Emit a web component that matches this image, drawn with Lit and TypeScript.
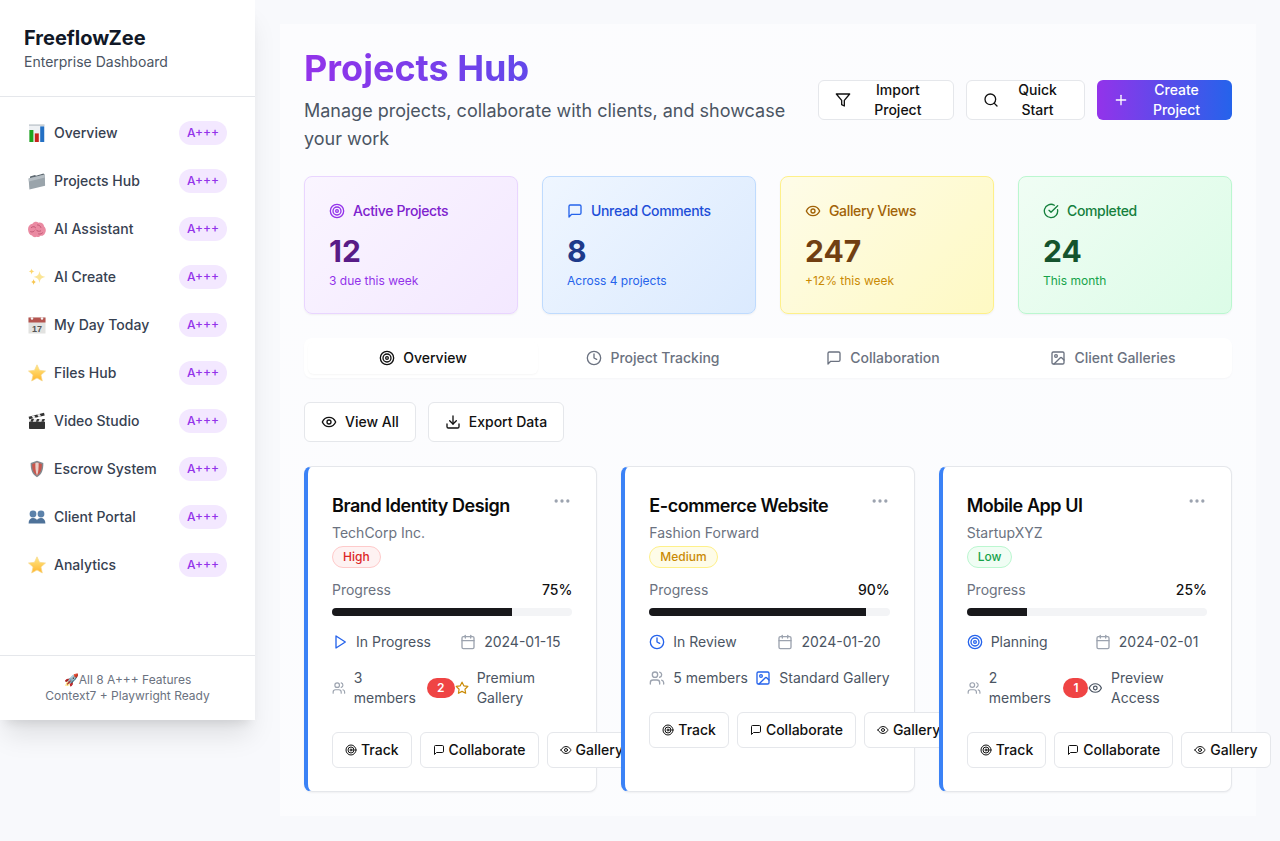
import { LitElement, css, html, svg } from "lit";
import { customElement } from "lit/decorators.js";

const shapes: Record<string, unknown> = {
  target: svg`<circle cx="12" cy="12" r="10"/><circle cx="12" cy="12" r="6"/><circle cx="12" cy="12" r="2"/>`,
  message: svg`<path d="M21 15a2 2 0 0 1-2 2H7l-4 4V5a2 2 0 0 1 2-2h14a2 2 0 0 1 2 2z"/>`,
  eye: svg`<path d="M2 12s3-7 10-7 10 7 10 7-3 7-10 7-10-7-10-7Z"/><circle cx="12" cy="12" r="3"/>`,
  check: svg`<path d="M21.801 10A10 10 0 1 1 17 3.335"/><path d="m9 11 3 3L22 4"/>`,
  filter: svg`<polygon points="22 3 2 3 10 12.46 10 19 14 21 14 12.46 22 3"/>`,
  search: svg`<circle cx="11" cy="11" r="8"/><path d="m21 21-4.3-4.3"/>`,
  plus: svg`<path d="M5 12h14"/><path d="M12 5v14"/>`,
  clock: svg`<circle cx="12" cy="12" r="10"/><polyline points="12 6 12 12 16 14"/>`,
  image: svg`<rect x="3" y="3" width="18" height="18" rx="2"/><circle cx="9" cy="9" r="2"/><path d="m21 15-3.086-3.086a2 2 0 0 0-2.828 0L6 21"/>`,
  download: svg`<path d="M21 15v4a2 2 0 0 1-2 2H5a2 2 0 0 1-2-2v-4"/><polyline points="7 10 12 15 17 10"/><line x1="12" y1="15" x2="12" y2="3"/>`,
  play: svg`<polygon points="6 3 20 12 6 21 6 3"/>`,
  calendar: svg`<path d="M8 2v4"/><path d="M16 2v4"/><rect x="3" y="4" width="18" height="18" rx="2"/><path d="M3 10h18"/>`,
  users: svg`<path d="M16 21v-2a4 4 0 0 0-4-4H6a4 4 0 0 0-4 4v2"/><circle cx="9" cy="7" r="4"/><path d="M22 21v-2a4 4 0 0 0-3-3.87"/><path d="M16 3.13a4 4 0 0 1 0 7.75"/>`,
  star: svg`<polygon points="12 2 15.09 8.26 22 9.27 17 14.14 18.18 21.02 12 17.77 5.82 21.02 7 14.14 2 9.27 8.91 8.26 12 2"/>`,
  more: svg`<circle cx="12" cy="12" r="1"/><circle cx="19" cy="12" r="1"/><circle cx="5" cy="12" r="1"/>`,
};

const icon = (name: string, cls = "") =>
  html`<svg class="icon ${cls}" viewBox="0 0 24 24" fill="none" stroke="currentColor" stroke-width="2" stroke-linecap="round" stroke-linejoin="round">${shapes[name]}</svg>`;

// the nav pictures, drawn on an 18 x 18 box
const pictures: Record<string, unknown> = {
  chart: svg`
    <rect x="1" y="0.5" width="15.5" height="17.5" fill="#eef1f4"/>
    <rect x="1" y="0.5" width="15.5" height="1.2" fill="#b9c1c8"/>
    <rect x="1.4" y="6" width="4" height="12" fill="#1ea51e"/>
    <rect x="6.8" y="9.4" width="4" height="8.6" fill="#c8231c"/>
    <rect x="12.2" y="2.4" width="4" height="15.6" fill="#2470c4"/>`,
  folder: svg`
    <path d="M2 4.5 7 3l1 .8 7.5-2.2.8 1v9L2.5 16Z" fill="#5d6870"/>
    <path d="M.6 6.6 16.8 2.6l.3 11.2L1.4 17.4Z" fill="#9aa4ab"/>
    <path d="M.6 6.6 16.8 2.6l.1 3L.9 9.4Z" fill="#b6bec4"/>`,
  brain: svg`
    <g transform="translate(-1 -1.8) scale(1.1 1.25)">
      <path d="M1 9.400C.6 6.600 2.600 4.600 5 4.400 6.400 2.600 9 2.400 10.400 3.600c2.400-.6 4.800.8 5.200 3 1.600 1.200 2 3.600.8 5.200-.6 1.600-2.400 2.600-4.200 2.200-.8 1-2.200 1.400-3.400.8-1.600.8-3.400.2-4.200-1C2.600 13.600 1.200 11.600 1 9.400Z" fill="#ea8aa2"/>
      <path d="M4 7.400c1.400-1 3-.8 3.800.2M9.600 5.400c1.400 0 2.600.8 3 2M3.400 10.800c1.200.4 2.400.2 3.200-.6M8.400 9.400c1 1.200 2.600 1.400 4 .8M10.600 12.600c1.200.2 2.400 0 3.400-.8" fill="none" stroke="#bd5370" stroke-width=".8" stroke-linecap="round"/>
    </g>`,
  sparkles: svg`
    <path d="M11.500 3c.7 4 1.900 5.200 6 5.900-4.100.8-5.300 2-6 6-.7-4-1.900-5.200-6-6 4.100-.7 5.300-1.900 6-5.900Z" fill="#fbe596"/>
    <path d="M3.600 .6c.4 2 .9 2.500 2.900 2.900-2 .4-2.500.9-2.900 2.900-.4-2-.9-2.500-2.900-2.900 2-.4 2.500-.9 2.900-2.900Z" fill="#fdd76e"/>
    <path d="M5.600 11c.4 2 .9 2.600 2.700 3-1.800.4-2.300 1-2.700 3-.4-2-.9-2.600-2.700-3 1.800-.4 2.300-1 2.700-3Z" fill="#f7c54d"/>`,
  calendar: svg`
    <rect x=".5" y="1.500" width="17" height="16" fill="#e2e2e0"/>
    <rect x=".5" y="1.500" width="17" height="5" fill="#b4544f"/>
    <circle cx="4" cy="2.500" r="1.200" fill="#f4f4f4"/>
    <circle cx="14" cy="2.500" r="1.200" fill="#f4f4f4"/>
    <text x="9" y="15.500" text-anchor="middle" font-family="Liberation Sans, sans-serif" font-size="9" font-weight="700" fill="#555">17</text>`,
  star: svg`
    <defs><linearGradient id="gold" x1="0" y1="0" x2="0" y2="1"><stop offset="0" stop-color="#ffe98a"/><stop offset="1" stop-color="#ffb52c"/></linearGradient></defs>
    <polygon points="9 .8 11.500 6.300 17.500 7 13 11 14.300 17 9 14 3.700 17 5 11 .5 7 6.500 6.300" fill="url(#gold)" stroke="#f6d98c" stroke-width=".7" stroke-linejoin="round"/>`,
  clapper: svg`
    <rect x="1" y="7" width="16" height="10" rx=".8" fill="#333"/>
    <rect x="1" y="7" width="16" height="2.800" fill="#e8e8e8"/>
    <path d="M3.500 7h2.500l-1.200 2.800H2.300ZM9 7h2.500l-1.200 2.800H7.800ZM14.500 7H17l-1.200 2.800h-2.500Z" fill="#333"/>
    <path d="M.6 4.700 16 .8l.7 2.600L1.300 7.300Z" fill="#333"/>
    <path d="M3.500 4 6 3.300l1.700 2.300-2.500.6ZM9 2.600l2.500-.6 1.700 2.300-2.500.6Z" fill="#eee"/>`,
  shield: svg`
    <path d="M9 .8 15.300 3c.2 6.500-1.300 11.400-6.300 14.200C4 14.400 2.500 9.500 2.700 3Z" fill="#83898f"/>
    <path d="M9 2.400 13.800 4c.1 5.300-1 9.200-4.800 11.500C5.200 13.200 4.100 9.300 4.200 4Z" fill="#c9564c"/>
    <path d="M9 2.400 10.600 3c.1 4.700 0 8.800-1.600 12.500C7.400 11.800 7.300 7.700 7.400 3Z" fill="#e9cdc6"/>`,
  team: svg`
    <circle cx="5" cy="6" r="3.400" fill="#5c82aa"/>
    <circle cx="13" cy="6" r="3.400" fill="#5c82aa"/>
    <path d="M.6 15.500c0-3.600 1.800-5.500 4.400-5.500s3.400 1 4 2.200c.6-1.200 1.400-2.200 4-2.200s4.400 1.900 4.400 5.500Z" fill="#4e7299"/>`,
};

const navItems = [
  ["chart", "Overview"],
  ["folder", "Projects Hub"],
  ["brain", "AI Assistant"],
  ["sparkles", "AI Create"],
  ["calendar", "My Day Today"],
  ["star", "Files Hub"],
  ["clapper", "Video Studio"],
  ["shield", "Escrow System"],
  ["team", "Client Portal"],
  ["star", "Analytics"],
];

const stats = [
  { tone: "purple", icon: "target", label: "Active Projects", value: "12", note: "3 due this week" },
  { tone: "blue", icon: "message", label: "Unread Comments", value: "8", note: "Across 4 projects" },
  { tone: "yellow", icon: "eye", label: "Gallery Views", value: "247", note: "+12% this week" },
  { tone: "green", icon: "check", label: "Completed", value: "24", note: "This month" },
];

const tabs = [
  ["target", "Overview"],
  ["clock", "Project Tracking"],
  ["message", "Collaboration"],
  ["image", "Client Galleries"],
];

const projects = [
  {
    title: "Brand Identity Design", client: "TechCorp Inc.", priority: "High", progress: 75,
    statusIcon: "play", status: "In Progress", date: "2024-01-15", members: "3 members", unread: 2,
    galleryIcon: "star", galleryTone: "gold", gallery: "Premium Gallery",
  },
  {
    title: "E-commerce Website", client: "Fashion Forward", priority: "Medium", progress: 90,
    statusIcon: "clock", status: "In Review", date: "2024-01-20", members: "5 members", unread: 0,
    galleryIcon: "image", galleryTone: "accent", gallery: "Standard Gallery",
  },
  {
    title: "Mobile App UI", client: "StartupXYZ", priority: "Low", progress: 25,
    statusIcon: "target", status: "Planning", date: "2024-02-01", members: "2 members", unread: 1,
    galleryIcon: "eye", galleryTone: "slate", gallery: "Preview Access",
  },
];

@customElement("app-root")
export class AppRoot extends LitElement {
  static styles = css`
    :host {
      display: flex;
      align-items: flex-start;
      min-height: 841px;
      background: #f8f9fc;
      font-family: Inter, "Noto Sans", sans-serif;
      color: #111827;
    }
    * {
      box-sizing: border-box;
    }
    .icon {
      width: 16px;
      height: 16px;
      min-width: 0;
      display: block;
    }
    .sidebar {
      width: 255px;
      height: 720px;
      flex: none;
      display: flex;
      flex-direction: column;
      background: #fff;
      box-shadow: 0 20px 25px -5px rgba(0, 0, 0, 0.1), 0 8px 10px -6px rgba(0, 0, 0, 0.1);
    }
    .brand {
      padding: 24px;
      border-bottom: 1px solid #e5e7eb;
    }
    .brand h1 {
      margin: 0;
      font-size: 20px;
      line-height: 28px;
      font-weight: 700;
    }
    .brand p {
      margin: 0;
      font-size: 14px;
      line-height: 20px;
      color: #4b5563;
    }
    .nav {
      flex: 1;
      padding: 16px;
      display: flex;
      flex-direction: column;
      gap: 8px;
    }
    .nav-item {
      height: 40px;
      padding: 0 12px;
      display: flex;
      align-items: center;
      gap: 8px;
      font-size: 14px;
      line-height: 20px;
      font-weight: 500;
      color: #374151;
    }
    .nav-pic {
      width: 18px;
      height: 18px;
      flex: none;
      display: block;
    }
    .nav-label {
      flex: 1;
    }
    .grade {
      width: 48px;
      height: 24px;
      border-radius: 999px;
      background: #f3e8ff;
      color: #9333ea;
      font-size: 12px;
      font-weight: 500;
      line-height: 24px;
      text-align: center;
    }
    .foot {
      padding: 16px;
      border-top: 1px solid #e5e7eb;
      font-size: 12px;
      line-height: 16px;
      color: #6b7280;
      text-align: center;
    }
    .panel {
      width: 976px;
      margin: 24px 0 25px 25px;
      padding: 24px;
      background: linear-gradient(135deg, #fcfcfe, #fbfcfe);
    }
    .head {
      display: flex;
      align-items: center;
      justify-content: space-between;
      margin-bottom: 24px;
    }
    .head h2 {
      margin: 0 0 9px;
      font-size: 36px;
      line-height: 40px;
      font-weight: 700;
      color: transparent;
      background: linear-gradient(90deg, #9333ea, #2563eb);
      -webkit-background-clip: text;
      background-clip: text;
    }
    .head p {
      margin: 0 0 -1px;
      font-size: 18px;
      line-height: 28px;
      color: #4b5563;
    }
    .head-actions {
      display: flex;
      gap: 12px;
    }
    .btn {
      display: flex;
      align-items: center;
      justify-content: center;
      gap: 8px;
      height: 40px;
      padding: 0 16px;
      border: 1px solid #e5e7eb;
      border-radius: 6px;
      background: #fff;
      color: #111;
      font-family: inherit;
      font-size: 14px;
      font-weight: 500;
      line-height: 20px;
    }
    .btn .icon {
      flex: none;
    }
    .btn.primary {
      border: 0;
      color: #fff;
      background: linear-gradient(90deg, #9333ea, #2563eb);
    }
    .stats {
      display: grid;
      grid-template-columns: repeat(4, 1fr);
      gap: 24px;
      margin-bottom: 24px;
    }
    .stat {
      padding: 24px;
      border: 1px solid;
      border-radius: 8px;
      box-shadow: 0 1px 2px rgba(0, 0, 0, 0.05);
    }
    .stat-label {
      display: flex;
      align-items: center;
      gap: 8px;
      font-size: 14px;
      line-height: 20px;
      font-weight: 500;
      letter-spacing: -0.025em;
    }
    .stat-value {
      margin-top: 12px;
      font-size: 30px;
      line-height: 36px;
      font-weight: 700;
    }
    .stat-note {
      margin-top: 4px;
      font-size: 12px;
      line-height: 16px;
    }
    .purple {
      background: linear-gradient(135deg, #faf5ff, #f3e8ff);
      border-color: #e9d5ff;
    }
    .purple .stat-label { color: #7e22ce; }
    .purple .stat-label .icon { color: #9333ea; }
    .purple .stat-value { color: #581c87; }
    .purple .stat-note { color: #9333ea; }
    .blue {
      background: linear-gradient(135deg, #eff6ff, #dbeafe);
      border-color: #bfdbfe;
    }
    .blue .stat-label { color: #1d4ed8; }
    .blue .stat-label .icon { color: #2563eb; }
    .blue .stat-value { color: #1e3a8a; }
    .blue .stat-note { color: #2563eb; }
    .yellow {
      background: linear-gradient(135deg, #fefce8, #fef9c3);
      border-color: #fef08a;
    }
    .yellow .stat-label { color: #a16207; }
    .yellow .stat-label .icon { color: #a16207; }
    .yellow .stat-value { color: #713f12; }
    .yellow .stat-note { color: #ca8a04; }
    .green {
      background: linear-gradient(135deg, #f0fdf4, #dcfce7);
      border-color: #bbf7d0;
    }
    .green .stat-label { color: #15803d; }
    .green .stat-label .icon { color: #15803d; }
    .green .stat-value { color: #14532d; }
    .green .stat-note { color: #16a34a; }
    .tabs {
      display: grid;
      grid-template-columns: repeat(4, 1fr);
      padding: 4px;
      margin-bottom: 24px;
      border-radius: 8px;
      background: #fff;
      box-shadow: 0 1px 2px rgba(0, 0, 0, 0.03);
    }
    .tab {
      height: 32px;
      display: flex;
      align-items: center;
      justify-content: center;
      gap: 8px;
      border-radius: 6px;
      font-size: 14px;
      line-height: 20px;
      font-weight: 500;
      color: #6b7280;
    }
    .tab.active {
      color: #111;
      background: #fff;
      box-shadow: 0 1px 2px rgba(0, 0, 0, 0.04);
    }
    .tools {
      display: flex;
      gap: 12px;
      margin-bottom: 24px;
    }
    .cards {
      display: grid;
      grid-template-columns: repeat(3, 1fr);
      gap: 24px;
    }
    .card {
      padding: 24px 24px 23px;
      min-width: 0;
      background: #fff;
      border: 1px solid #e5e7eb;
      border-left: 4px solid #3b82f6;
      border-radius: 8px;
      box-shadow: 0 1px 2px rgba(0, 0, 0, 0.05);
    }
    .card-top {
      display: flex;
      justify-content: space-between;
      align-items: flex-start;
    }
    .card-top h3 {
      margin: 0;
      font-size: 18px;
      line-height: 30px;
      font-weight: 600;
      letter-spacing: -0.025em;
      color: #0a0a0a;
    }
    .more {
      width: 20px;
      height: 20px;
      color: #9ca3af;
    }
    .client {
      margin-top: 2px;
      font-size: 14px;
      line-height: 20px;
      color: #6b7280;
    }
    .priority {
      display: block;
      width: fit-content;
      margin-top: 3px;
      padding: 2px 10px;
      border: 1px solid;
      border-radius: 999px;
      font-size: 12px;
      line-height: 16px;
      font-weight: 500;
    }
    .High { background: #fef2f2; color: #dc2626; border-color: #fecaca; }
    .Medium { background: #fefce8; color: #ca8a04; border-color: #fef08a; }
    .Low { background: #f0fdf4; color: #16a34a; border-color: #bbf7d0; }
    .progress-row {
      display: flex;
      justify-content: space-between;
      margin-top: 12px;
      font-size: 14px;
      line-height: 20px;
      color: #6b7280;
    }
    .progress-row b {
      font-weight: 500;
      color: #111;
    }
    .track {
      height: 8px;
      margin-top: 8px;
      border-radius: 999px;
      background: #f3f4f6;
      overflow: hidden;
    }
    .fill {
      height: 100%;
      background: #18181b;
    }
    .meta {
      display: grid;
      grid-template-columns: 1fr 1fr;
      gap: 16px;
      margin-top: 16px;
    }
    .meta-item,
    .people,
    .gallery {
      display: flex;
      align-items: center;
      gap: 8px;
      font-size: 14px;
      line-height: 20px;
      color: #4b5563;
    }
    .accent { color: #2563eb; }
    .muted { color: #9ca3af; }
    .gold { color: #ca8a04; }
    .slate { color: #4b5563; }
    .team {
      display: flex;
      justify-content: space-between;
      align-items: center;
      margin-top: 16px;
    }
    .unread {
      flex: none;
      margin-left: 1px;
      padding: 2px 10px;
      border-radius: 999px;
      background: #ef4444;
      color: #fff;
      font-size: 12px;
      line-height: 16px;
      font-weight: 600;
    }
    .card-actions {
      display: flex;
      gap: 8px;
      margin-top: 24px;
    }
    .mini {
      flex: none;
      display: flex;
      align-items: center;
      gap: 4px;
      height: 36px;
      padding: 0 12px;
      border: 1px solid #e5e7eb;
      border-radius: 6px;
      background: #fff;
      color: #111;
      font-family: inherit;
      font-size: 14px;
      line-height: 20px;
      font-weight: 500;
    }
    .mini .icon {
      width: 12px;
      height: 12px;
    }
  `;

  renderCard(p: (typeof projects)[number]) {
    return html`
      <article class="card">
        <div class="card-top">
          <h3>${p.title}</h3>
          ${icon("more", "more")}
        </div>
        <div class="client">${p.client}</div>
        <span class="priority ${p.priority}">${p.priority}</span>
        <div class="progress-row"><span>Progress</span><b>${p.progress}%</b></div>
        <div class="track"><div class="fill" style="width:${p.progress}%"></div></div>
        <div class="meta">
          <div class="meta-item">${icon(p.statusIcon, "accent")}<span>${p.status}</span></div>
          <div class="meta-item">${icon("calendar", "muted")}<span>${p.date}</span></div>
        </div>
        <div class="team">
          <div class="people">
            ${icon("users", "muted")}<span>${p.members}</span>
            ${p.unread ? html`<span class="unread">${p.unread}</span>` : ""}
          </div>
          <div class="gallery">${icon(p.galleryIcon, p.galleryTone)}<span>${p.gallery}</span></div>
        </div>
        <div class="card-actions">
          <button class="mini">${icon("target")}Track</button>
          <button class="mini">${icon("message")}Collaborate</button>
          <button class="mini">${icon("eye")}Gallery</button>
        </div>
      </article>
    `;
  }

  render() {
    return html`
      <aside class="sidebar">
        <div class="brand">
          <h1>FreeflowZee</h1>
          <p>Enterprise Dashboard</p>
        </div>
        <nav class="nav">
          ${navItems.map(
            ([pic, label]) => html`
              <div class="nav-item">
                <svg class="nav-pic" viewBox="0 0 18 18">${pictures[pic]}</svg>
                <span class="nav-label">${label}</span>
                <span class="grade">A+++</span>
              </div>
            `
          )}
        </nav>
        <div class="foot">🚀All 8 A+++ Features<br />Context7 + Playwright Ready</div>
      </aside>
      <main class="panel">
        <header class="head">
          <div>
            <h2>Projects Hub</h2>
            <p>Manage projects, collaborate with clients, and showcase your work</p>
          </div>
          <div class="head-actions">
            <button class="btn">${icon("filter")}Import Project</button>
            <button class="btn">${icon("search")}Quick Start</button>
            <button class="btn primary">${icon("plus")}Create Project</button>
          </div>
        </header>
        <section class="stats">
          ${stats.map(
            (s) => html`
              <div class="stat ${s.tone}">
                <div class="stat-label">${icon(s.icon)}${s.label}</div>
                <div class="stat-value">${s.value}</div>
                <div class="stat-note">${s.note}</div>
              </div>
            `
          )}
        </section>
        <div class="tabs">
          ${tabs.map(
            ([name, label], i) => html`<div class="tab ${i === 0 ? "active" : ""}">${icon(name)}${label}</div>`
          )}
        </div>
        <div class="tools">
          <button class="btn">${icon("eye")}View All</button>
          <button class="btn">${icon("download")}Export Data</button>
        </div>
        <section class="cards">${projects.map((p) => this.renderCard(p))}</section>
      </main>
    `;
  }
}
